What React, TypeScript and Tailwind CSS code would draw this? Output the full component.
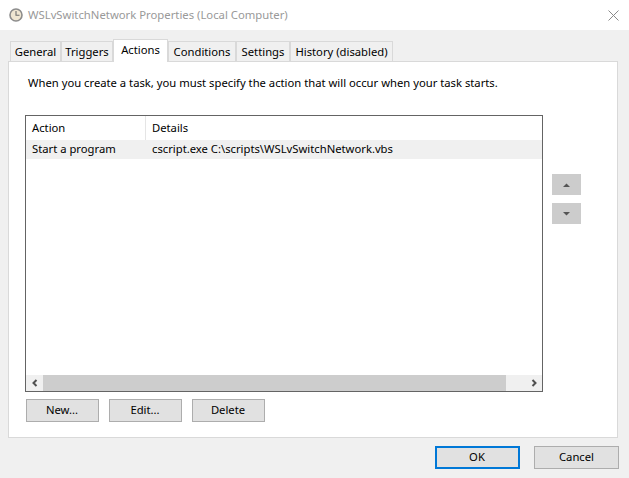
import React from "react";

const tabs = [
  { label: "General", w: "w-[51px]" },
  { label: "Triggers", w: "w-[52px]" },
  { label: "Actions", w: "w-[55px]", active: true },
  { label: "Conditions", w: "w-[68px]" },
  { label: "Settings", w: "w-[54px]" },
  { label: "History (disabled)", w: "w-[103px]" },
];

function Btn({ children, w }: { children: React.ReactNode; w: string }) {
  return (
    <button className={`${w} h-[23px] bg-[#e1e1e1] border border-[#adadad] flex items-center justify-center text-black pr-[1px]`}>
      {children}
    </button>
  );
}

function MoveBtn({ up }: { up?: boolean }) {
  return (
    <button className="w-[29px] h-[21px] bg-[#cccccc] flex items-center justify-center">
      <svg width="7" height="4" viewBox="0 0 7 4">
        <path d={up ? "M0 4L3.5 0.5L7 4Z" : "M0 0L3.5 3.5L7 0Z"} fill="#555555" />
      </svg>
    </button>
  );
}

export default function App() {
  return (
    <div className="w-[629px] h-[478px] bg-[#f0f0f0] flex flex-col overflow-hidden font-['Noto_Sans',sans-serif] text-[11.25px] text-black">
      <div className="h-[30px] bg-white flex items-center shrink-0 pl-[9px] pr-[10px]">
        <svg width="14" height="14" viewBox="0 0 14 14" className="shrink-0">
          <circle cx="7" cy="7" r="6" fill="#efe6d2" stroke="#8c8c8c" strokeWidth="1.6" />
          <path d="M7 3V7.3H10.5" fill="none" stroke="#6e6e6e" strokeWidth="1.1" />
        </svg>
        <span className="ml-[5px] text-[11.3px] text-[#999999] leading-none">WSLvSwitchNetwork Properties (Local Computer)</span>
        <svg width="11" height="11" viewBox="0 0 11 11" className="ml-auto">
          <path d="M0.5 0.5L10.5 10.5M10.5 0.5L0.5 10.5" stroke="#8a8a8a" strokeWidth="1" fill="none" />
        </svg>
      </div>

      <div className="flex flex-col pl-[8px] pr-[11px] pt-[9px]">
        <div className="flex h-[22px] pl-[2px] items-end relative z-10">
          {tabs.map((t) =>
            t.active ? (
              <div key={t.label} className={`${t.w} h-[23px] -mb-[1px] bg-white border border-b-0 border-[#d9d9d9] flex items-start justify-center pt-[2px] leading-[16px]`}>
                {t.label}
              </div>
            ) : (
              <div key={t.label} className={`${t.w} h-[20px] bg-[#f0f0f0] border border-b-0 border-[#d9d9d9] flex items-center justify-center leading-[16px]`}>
                {t.label}
              </div>
            )
          )}
        </div>

        <div className="h-[377px] bg-white border border-[#d9d9d9] pl-[16px] pr-[35px] flex flex-col">
          <div className="ml-[3px] mt-[13px] h-[16px] leading-[16px] whitespace-nowrap">
            When you create a task, you must specify the action that will occur when your task starts.
          </div>
          <div className="flex mt-[24px]">
            <div className="w-[518px] h-[277px] border border-[#646464] flex flex-col shrink-0">
              <div className="flex h-[24px] shrink-0">
                <div className="w-[120px] border-r border-[#e5e5e5] pl-[6px] flex items-center">Action</div>
                <div className="pl-[6px] flex items-center">Details</div>
              </div>
              <div className="flex h-[19px] bg-[#f0f0f0] items-center shrink-0">
                <div className="w-[120px] pl-[6px]">Start a program</div>
                <div className="pl-[6px]">cscript.exe C:\scripts\WSLvSwitchNetwork.vbs</div>
              </div>
              <div className="flex-1" />
              <div className="h-[16px] bg-[#f0f0f0] flex shrink-0">
                <div className="w-[17px] flex items-center justify-center">
                  <svg width="8" height="8" viewBox="0 0 8 8">
                    <path d="M5.5 1L2.5 4L5.5 7" fill="none" stroke="#505050" strokeWidth="2" />
                  </svg>
                </div>
                <div className="w-[463px] bg-[#cdcdcd]" />
                <div className="flex-1 flex items-center justify-end pr-[4px]">
                  <svg width="8" height="8" viewBox="0 0 8 8">
                    <path d="M2.5 1L5.5 4L2.5 7" fill="none" stroke="#505050" strokeWidth="2" />
                  </svg>
                </div>
              </div>
            </div>
            <div className="ml-[9px] mt-[59px] flex flex-col gap-[8px]">
              <MoveBtn up />
              <MoveBtn />
            </div>
          </div>
          <div className="flex gap-[10px] ml-[1px] mt-[7px]">
            <Btn w="w-[73px]">New...</Btn>
            <Btn w="w-[73px]">Edit...</Btn>
            <Btn w="w-[73px]">Delete</Btn>
          </div>
        </div>

        <div className="flex justify-end gap-[14px] mt-[8px] -mr-[1px]">
          <button className="w-[85px] h-[23px] bg-[#e1e1e1] border-2 border-[#0078d7] flex items-center justify-center pr-[1px]">OK</button>
          <button className="w-[85px] h-[23px] bg-[#e1e1e1] border border-[#adadad] flex items-center justify-center">Cancel</button>
        </div>
      </div>
    </div>
  );
}
